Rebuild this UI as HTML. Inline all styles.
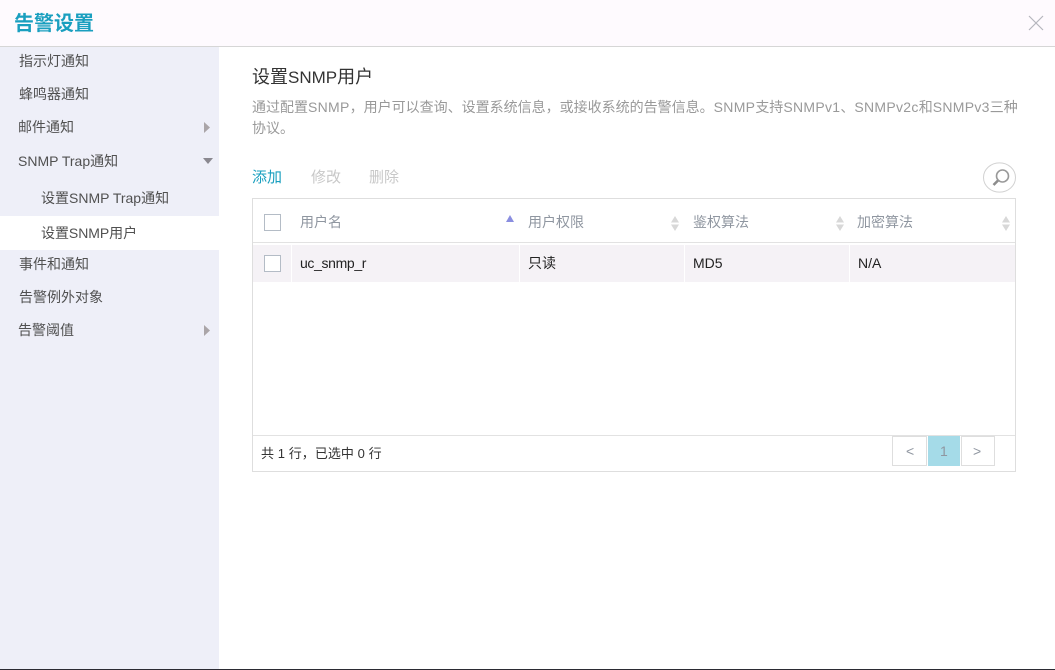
<!DOCTYPE html>
<html lang="zh"><head><meta charset="utf-8"><title>告警设置</title>
<style>
html,body{margin:0;padding:0;width:1055px;height:670px;overflow:hidden;background:#fff}
body{position:relative;font-family:"Liberation Sans","Noto Sans CJK SC",sans-serif;font-size:14px;color:#555}
.a{position:absolute;white-space:nowrap;line-height:20px}
.box{position:absolute;box-sizing:border-box}
.side{color:#505050;left:19px}
.th{color:#8f96a0}
.td{color:#222}
.l{letter-spacing:.3px}
</style></head><body>
<div class="box" style="left:0;top:0;width:1055px;height:47px;background:#fefafe;border-bottom:1px solid #d6d6d6"></div>
<div class="a" style="left:14px;top:10px;font-size:20px;line-height:28px;font-weight:bold;color:#1a9fbf">告警设置</div>
<svg class="box" style="left:1028px;top:15px" width="16" height="16" viewBox="0 0 16 16"><path d="M1 1L15 15M15 1L1 15" stroke="#b5b5bd" stroke-width="1.2" fill="none"/></svg>

<div class="box" style="left:0;top:47px;width:219px;height:622px;background:#eeeff8"></div>
<div class="box" style="left:0;top:216px;width:219px;height:34px;background:#fff"></div>
<div class="a side" style="top:51px">指示灯通知</div>
<div class="a side" style="top:84px">蜂鸣器通知</div>
<div class="a side" style="left:18px;top:117px">邮件通知</div>
<div class="a side" style="left:18px;top:151px">SNMP Trap通知</div>
<div class="a side" style="left:41px;top:188px">设置SNMP Trap通知</div>
<div class="a side" style="left:41px;top:223px;letter-spacing:-.05px">设置SNMP用户</div>
<div class="a side" style="top:254px">事件和通知</div>
<div class="a side" style="top:287px">告警例外对象</div>
<div class="a side" style="left:18px;top:320px">告警阈值</div>
<svg class="box" style="left:204px;top:122px" width="6" height="11"><path d="M0 0L6 5.500L0 11Z" fill="#aaa5a8"/></svg>
<svg class="box" style="left:203px;top:158px" width="10" height="6"><path d="M0 0H10L5 6Z" fill="#8a8890"/></svg>
<svg class="box" style="left:204px;top:325px" width="6" height="11"><path d="M0 0L6 5.500L0 11Z" fill="#aaa5a8"/></svg>

<div class="a" style="left:252px;top:66px;font-size:18px;line-height:22px;color:#333">设置<span style="font-size:17px">SNMP</span>用户</div>
<div class="a" style="left:252px;top:97px;color:#999">通过配置<span class="l">SNMP</span>，用户可以查询、设置系统信息，或接收系统的告警信息。<span class="l">SNMP</span>支持<span class="l">SNMPv1</span>、<span class="l">SNMPv2c</span>和<span class="l">SNMPv3</span>三种</div>
<div class="a" style="left:252px;top:118px;color:#999">协议。</div>
<div class="a" style="left:252px;top:168px;font-size:15px;color:#1a9fbf">添加</div>
<div class="a" style="left:311px;top:168px;font-size:15px;color:#c8c8c8">修改</div>
<div class="a" style="left:369px;top:168px;font-size:15px;color:#c8c8c8">删除</div>
<svg class="box" style="left:983px;top:162px" width="33" height="31" viewBox="0 0 33 31"><ellipse cx="16.5" cy="15.5" rx="16" ry="14.6" fill="#fff" stroke="#d2d2d2"/><circle cx="19.500" cy="14" r="6" fill="none" stroke="#999" stroke-width="1.6"/><path d="M15 18.500L10.500 23" stroke="#8c8c8c" stroke-width="2.6" fill="none"/></svg>

<div class="box" style="left:252px;top:198px;width:764px;height:274px;border:1px solid #dedede;background:#fff"></div>
<div class="box" style="left:253px;top:242px;width:762px;height:1px;background:#e2e2e2"></div>
<div class="box" style="left:253px;top:245px;width:762px;height:37px;background:#f5f2f6"></div>
<div class="box" style="left:291px;top:245px;width:1px;height:37px;background:#fff"></div>
<div class="box" style="left:519px;top:245px;width:1px;height:37px;background:#fff"></div>
<div class="box" style="left:684px;top:245px;width:1px;height:37px;background:#fff"></div>
<div class="box" style="left:849px;top:245px;width:1px;height:37px;background:#fff"></div>
<div class="box" style="left:264px;top:214px;width:17px;height:17px;border:1px solid #b4bcc6;background:#fff"></div>
<div class="box" style="left:264px;top:255px;width:17px;height:17px;border:1px solid #b4bcc6;background:#fff"></div>
<div class="a th" style="left:300px;top:212px">用户名</div>
<div class="a th" style="left:528px;top:212px">用户权限</div>
<div class="a th" style="left:693px;top:212px">鉴权算法</div>
<div class="a th" style="left:857px;top:212px">加密算法</div>
<svg class="box" style="left:506px;top:215px" width="8" height="7"><path d="M0 7L4 0L8 7Z" fill="#8a8ee0"/></svg>
<svg class="box" style="left:671px;top:216px" width="8" height="15"><path d="M0 6.500L4 0L8 6.500ZM0 8.500H8L4 15Z" fill="#d8d8d8"/></svg>
<svg class="box" style="left:836px;top:216px" width="8" height="15"><path d="M0 6.500L4 0L8 6.500ZM0 8.500H8L4 15Z" fill="#d8d8d8"/></svg>
<svg class="box" style="left:1002px;top:216px" width="8" height="15"><path d="M0 6.500L4 0L8 6.500ZM0 8.500H8L4 15Z" fill="#d8d8d8"/></svg>
<div class="a td" style="left:300px;top:253px;letter-spacing:-.35px">uc_snmp_r</div>
<div class="a td" style="left:528px;top:253px">只读</div>
<div class="a td" style="left:693px;top:253px">MD5</div>
<div class="a td" style="left:858px;top:253px">N/A</div>

<div class="box" style="left:253px;top:435px;width:762px;height:1px;background:#e2e2e2"></div>
<div class="a" style="left:261px;top:444px;font-size:13px;letter-spacing:.06px;color:#333">共 1 行，已选中 0 行</div>
<div class="box" style="left:892px;top:436px;width:35px;height:30px;border:1px solid #dedede;background:#fff"></div>
<div class="box" style="left:928px;top:436px;width:32px;height:30px;background:#a5dbe8"></div>
<div class="box" style="left:961px;top:436px;width:34px;height:30px;border:1px solid #dedede;background:#fff"></div>
<div class="a" style="left:906px;top:441px;color:#8f96a0">&lt;</div>
<div class="a" style="left:940px;top:441px;color:#8f96a0">1</div>
<div class="a" style="left:973px;top:441px;color:#8f96a0">&gt;</div>
<div class="box" style="left:0;top:669px;width:1055px;height:1px;background:#2b2b33"></div>
</body></html>
